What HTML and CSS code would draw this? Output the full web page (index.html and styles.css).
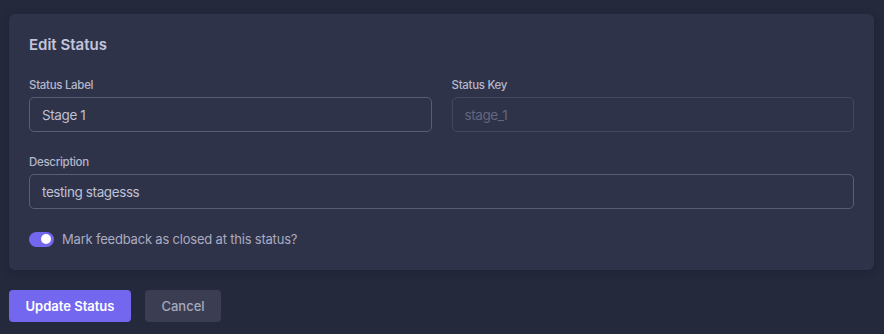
FILE: index.html
```html
<!DOCTYPE html>
<html>
<head>
<meta charset="utf-8">
<link rel="stylesheet" href="styles.css">
</head>
<body>
<div class="page">
  <div class="card">
    <h2 class="title">Edit Status</h2>
    <div class="row">
      <div class="field">
        <label class="label">Status Label</label>
        <div class="input">Stage 1</div>
      </div>
      <div class="field">
        <label class="label">Status Key</label>
        <div class="input disabled">stage_1</div>
      </div>
    </div>
    <div class="field full">
      <label class="label">Description</label>
      <div class="input">testing stagesss</div>
    </div>
    <div class="toggle-row">
      <span class="toggle"><span class="knob"></span></span>
      <span class="toggle-text">Mark feedback as closed at this status?</span>
    </div>
  </div>
  <div class="actions">
    <button class="btn primary">Update Status</button>
    <button class="btn secondary">Cancel</button>
  </div>
</div>
</body>
</html>
```
FILE: styles.css
```css
html, body {
  margin: 0;
  padding: 0;
  background: #25293c;
  font-family: Inter, "Noto Sans", sans-serif;
}
.page {
  padding: 14px 10px 0 9px;
}
.card {
  background: #2f3349;
  border-radius: 6px;
  padding: 20px 20px 20px 20px;
  box-shadow: 0 2px 8px rgba(15, 17, 30, 0.25);
  height: 216px;
}
.title {
  margin: 0;
  font-size: 15px;
  font-weight: 600;
  line-height: 22px;
  color: #c3c6da;
}
.row {
  display: grid;
  grid-template-columns: 1fr 1fr;
  column-gap: 20px;
  margin-top: 21px;
}
.field {
  display: flex;
  flex-direction: column;
}
.full {
  margin-top: 22px;
}
.label {
  font-size: 11.5px;
  letter-spacing: -0.3px;
  line-height: 16px;
  color: #b4b7cc;
  font-weight: 500;
  margin-bottom: 4px;
}
.input {
  height: 35px;
  box-sizing: border-box;
  border: 1px solid #595d78;
  border-radius: 5px;
  padding: 0 12px;
  display: flex;
  align-items: center;
  font-size: 13.5px;
  letter-spacing: -0.4px;
  color: #bfc1d4;
}
.input.disabled {
  border-color: #434760;
  color: #62667e;
}
.toggle-row {
  display: flex;
  align-items: center;
  gap: 8px;
  margin-top: 22px;
}
.toggle {
  width: 25px;
  height: 15px;
  border-radius: 8px;
  background: #7367f0;
  position: relative;
  display: inline-block;
}
.knob {
  position: absolute;
  right: 3px;
  top: 2.5px;
  width: 10px;
  height: 10px;
  border-radius: 50%;
  background: #fff;
}
.toggle-text {
  font-size: 13px;
  letter-spacing: -0.2px;
  color: #a9acc2;
}
.actions {
  display: flex;
  gap: 14px;
  margin-top: 20px;
}
.btn {
  font-family: Inter, "Noto Sans", sans-serif;
  border: none;
  border-radius: 4px;
  height: 32px;
  font-size: 13px;
  font-weight: 600;
  padding: 0 16.5px;
}
.primary {
  background: #7367f0;
  color: #fff;
}
.secondary {
  background: #3b3e52;
  color: #a5a8bc;
  font-weight: 500;
  padding: 0 16.5px;
}
```
